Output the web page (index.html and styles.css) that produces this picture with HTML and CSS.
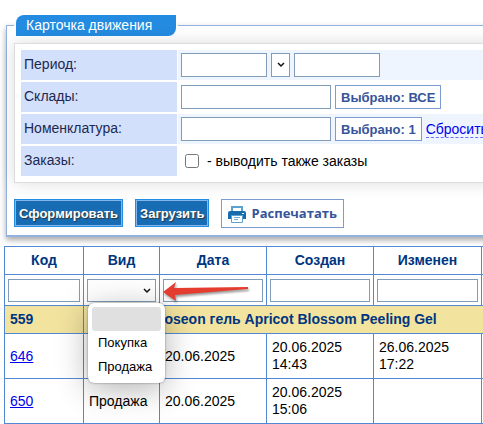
FILE: index.html
```html
<!DOCTYPE html>
<html lang="ru">
<head>
<meta charset="utf-8">
<title>Карточка движения</title>
<link rel="stylesheet" href="styles.css">
</head>
<body>
<main class="page">
  <form>
    <fieldset class="card">
      <legend class="card-legend"><span class="card-title">Карточка движения</span></legend>
      <div class="params">
        <div class="param">
          <label class="param-label" for="from">Период:</label>
          <div class="param-value">
            <input class="field date" id="from" type="text">
            <span class="select-box mini"><select class="field" aria-label="Выбор периода"><option></option></select><svg class="chevron" viewBox="0 0 8 6"><path d="M1 1l3 3 3-3"/></svg></span>
            <input class="field date" type="text" aria-label="Конец периода">
          </div>
        </div>
        <div class="param">
          <label class="param-label" for="stores">Склады:</label>
          <div class="param-value">
            <input class="field wide" id="stores" type="text">
            <button class="pick" type="button">Выбрано: ВСЕ</button>
          </div>
        </div>
        <div class="param">
          <label class="param-label" for="goods">Номенклатура:</label>
          <div class="param-value">
            <input class="field wide" id="goods" type="text">
            <button class="pick" type="button">Выбрано: 1</button>
            <a class="reset" href="#">Сбросить</a>
          </div>
        </div>
        <div class="param">
          <span class="param-label">Заказы:</span>
          <div class="param-value">
            <label class="check"><input type="checkbox"> - выводить также заказы</label>
          </div>
        </div>
      </div>
      <div class="actions">
        <button class="primary" type="button">Сформировать</button>
        <button class="primary" type="button">Загрузить</button>
        <button class="print" type="button">
          <svg class="printer" viewBox="0 0 18 18">
            <path fill="#5aa3d0" d="M3 1h12v5h-2V3H5v3H3z"/>
            <path fill="#176cae" d="M2 6h14a2 2 0 0 1 2 2v6h-3v-3H3v3H0V8a2 2 0 0 1 2-2z"/>
            <path fill="#fff" stroke="#5aa3d0" d="M3.500 10.500h11v7h-11z"/>
            <path stroke="#74b2d8" d="M6 12.500h6M6 14.500h4"/>
            <path fill="#fff" d="M14 8h2v1h-2z"/>
          </svg>
          Распечатать
        </button>
      </div>
    </fieldset>
  </form>

  <table class="moves">
    <colgroup><col class="c-code"><col class="c-kind"><col class="c-date"><col class="c-date"><col class="c-changed"><col></colgroup>
    <thead>
      <tr class="head"><th>Код</th><th>Вид</th><th>Дата</th><th>Создан</th><th>Изменен</th><th></th></tr>
      <tr class="filters">
        <td><input class="field" type="text" aria-label="Код"></td>
        <td>
          <div class="select-box">
            <select class="field" aria-label="Вид"><option></option><option>Покупка</option><option>Продажа</option></select>
            <svg class="chevron" viewBox="0 0 8 6"><path d="M1 1l3 3 3-3"/></svg>
            <ul class="menu"><li class="current"></li><li>Покупка</li><li>Продажа</li></ul>
            <svg class="pointer" viewBox="0 0 86 22"><path d="M0 11L13 1l-2 6 74-1v2l-73 6 1 6z"/></svg>
          </div>
        </td>
        <td><input class="field" type="text" aria-label="Дата"></td>
        <td><input class="field" type="text" aria-label="Создан"></td>
        <td><input class="field" type="text" aria-label="Изменен"></td>
        <td></td>
      </tr>
    </thead>
    <tbody>
      <tr class="group"><td>559</td><td colspan="5">Beauty of Joseon гель Apricot Blossom Peeling Gel</td></tr>
      <tr class="row"><td><a href="#">646</a></td><td></td><td>20.06.2025</td><td>20.06.2025<br>14:43</td><td>26.06.2025<br>17:22</td><td></td></tr>
      <tr class="row"><td><a href="#">650</a></td><td>Продажа</td><td>20.06.2025</td><td>20.06.2025<br>15:06</td><td></td><td></td></tr>
    </tbody>
  </table>
</main>
</body>
</html>
```
FILE: styles.css
```css
* {
  box-sizing: border-box;
}

body {
  margin: 0;
  overflow: hidden;
  background: #fff;
  color: #000;
  font: 14px/17px "Liberation Sans", Arial, sans-serif;
}

.page {
  min-width: 700px;
  padding: 15px 4px 0;
}

.card {
  margin: 0 2px;
  padding: 7px;
  border: 1px solid #94b2e0;
  border-bottom-width: 2px;
  box-shadow: 0 3px 6px rgba(0, 0, 0, 0.35);
}

.card-legend {
  padding: 0 2px;
}

.card-title {
  display: block;
  width: 160px;
  padding: 2px 10px;
  border-radius: 8px 0;
  background: #238be0;
  color: #fff;
}

.params {
  display: grid;
  gap: 2px;
  padding: 6px;
  border: 1px solid #ddd;
  background: #fff;
  box-shadow: 0 0 16px rgba(0, 0, 0, 0.14);
}

.param {
  display: grid;
  grid-template-columns: 156px 1fr;
  gap: 1px;
  min-height: 30px;
}

.param-label {
  padding: 6px 3px;
  background: #d3e0fc;
  color: #1c2850;
}

.param-value {
  display: flex;
  align-items: center;
  gap: 4px;
  padding: 3px;
}

.param:nth-child(odd) .param-value {
  background: #eef5ff;
}

.field {
  width: 100%;
  height: 24px;
  margin: 0;
  padding: 0 4px;
  border: 1px solid #7f9db9;
  border-radius: 0;
  background: #fff;
  font: inherit;
}

.field.date {
  width: 86px;
}

.field.wide {
  width: 150px;
}

.select-box {
  display: block;
  position: relative;
}

.select-box select {
  display: block;
  appearance: none;
}

.select-box.mini {
  width: 19px;
}

.chevron {
  position: absolute;
  top: 9px;
  right: 5px;
  width: 8px;
  height: 6px;
  fill: none;
  stroke: #111;
  stroke-width: 1.5;
  pointer-events: none;
}

.pick,
.print {
  border: 1px solid #7b9bd1;
  background: #fff;
  color: #365499;
  font: bold 13px/17px "Liberation Sans", Arial, sans-serif;
}

.pick {
  height: 24px;
  padding: 0 5px;
}

.reset {
  border-bottom: 1px dashed #6c6cf5;
  color: #00e;
  line-height: 16px;
  text-decoration: none;
}

.check {
  display: flex;
  align-items: center;
  gap: 8px;
  padding-left: 4px;
}

.check input {
  width: 14px;
  height: 14px;
  margin: 0;
}

.actions {
  display: flex;
  gap: 12px;
  margin-top: 16px;
}

.primary {
  height: 28px;
  padding: 0 4px;
  border: 1px solid #238be0;
  background: #176cb4;
  box-shadow: inset 0 0 0 1px #84b6ee;
  color: #fff;
  font: bold 13px/17px "Liberation Sans", Arial, sans-serif;
  text-shadow: 1px 1px 1px #333;
}

.print {
  display: flex;
  align-items: center;
  gap: 5px;
  height: 29px;
  padding: 0 6px;
  font-family: "Open Sans", sans-serif;
}

.printer {
  width: 18px;
  height: 18px;
  fill: none;
}

.moves {
  width: 100%;
  margin-top: 9px;
  border-collapse: collapse;
  table-layout: fixed;
}

.c-code {
  width: 79px;
}

.c-kind {
  width: 76px;
}

.c-date {
  width: 107px;
}

.c-changed {
  width: 108px;
}

.moves th,
.moves td {
  padding: 0 5px;
  border: 1px solid #5389d3;
}

.head {
  height: 28px;
  color: #003580;
}

.filters {
  height: 31px;
}

.moves .filters td {
  padding: 0 3px;
}

.filters .field {
  display: block;
  height: 23px;
}

.group {
  height: 28px;
  background: #f2e39f;
  color: #003580;
  font-weight: bold;
}

.row {
  height: 45px;
}

.row a {
  color: #00e;
}

.menu {
  position: absolute;
  z-index: 1;
  top: 24px;
  left: 1px;
  width: 77px;
  margin: 0;
  padding: 4px;
  border-radius: 6px;
  background: #fff;
  box-shadow: 0 0 2px rgba(0, 0, 0, 0.5), 0 6px 32px rgba(0, 0, 0, 0.3);
  font-size: 13px;
  line-height: 24px;
  list-style: none;
}

.menu li {
  height: 24px;
  padding: 0 6px;
  border-radius: 3px;
}

.menu .current {
  background: #e0e0e0;
}

.pointer {
  position: absolute;
  z-index: 2;
  top: 2px;
  left: 76px;
  width: 86px;
  height: 22px;
  fill: #e43d30;
  filter: drop-shadow(1px 2px 1px rgba(0, 0, 0, 0.4));
  pointer-events: none;
}
```
